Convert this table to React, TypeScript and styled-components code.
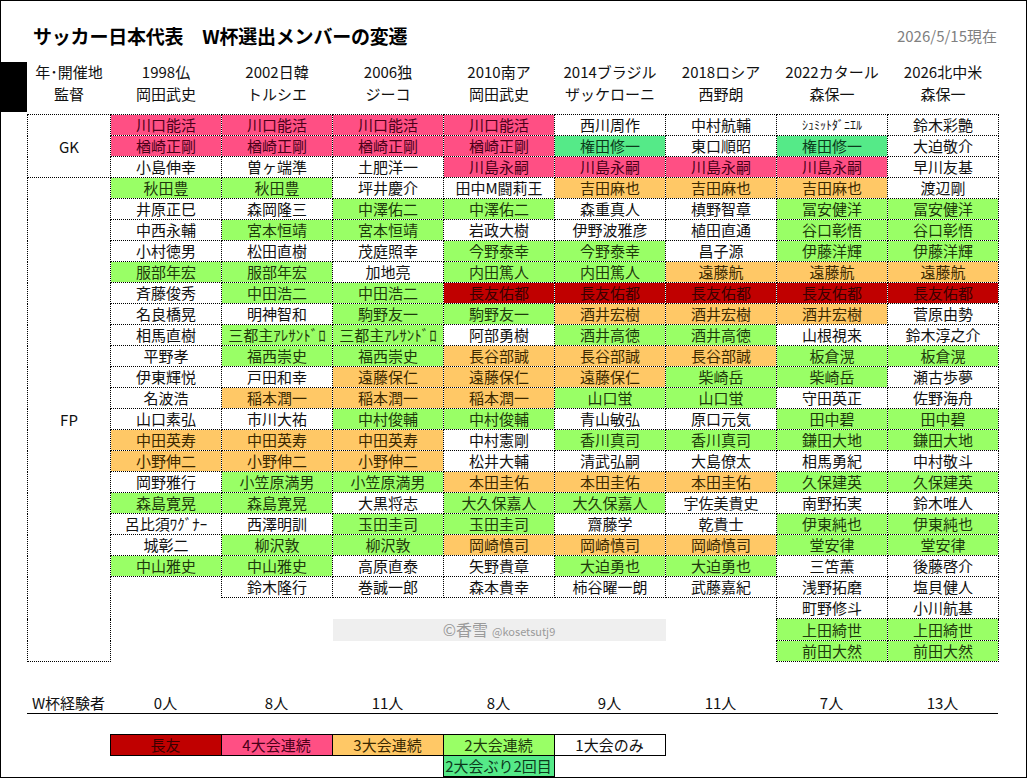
import styled, { createGlobalStyle } from "styled-components";

type Code = "R" | "P" | "O" | "G" | "M" | "W";

const fills: Record<Code, { bg: string; fg: string }> = {
  R: { bg: "#c00000", fg: "#3a0000" },
  P: { bg: "#ff4f84", fg: "#4a0018" },
  O: { bg: "#ffc866", fg: "#3a2800" },
  G: { bg: "#99ff66", fg: "#1e3a0c" },
  M: { bg: "#55ea88", fg: "#0c3a1c" },
  W: { bg: "#ffffff", fg: "#111111" },
};

type Entry = { code: Code; name: string; small: boolean };

// "P川口能活" -> pink cell, "~" after the code shrinks the text
const parse = (list: string): Entry[] =>
  list.split(" ").map((s) => ({
    code: s[0] as Code,
    small: s[1] === "~",
    name: s[1] === "~" ? s.slice(2) : s.slice(1),
  }));

const cups = [
  {
    year: "1998仏",
    coach: "岡田武史",
    gk: parse("P川口能活 P楢崎正剛 W小島伸幸"),
    fp: parse(
      "G秋田豊 W井原正巳 W中西永輔 W小村徳男 G服部年宏 W斉藤俊秀 W名良橋晃 W相馬直樹 W平野孝 W伊東輝悦 W名波浩 W山口素弘 O中田英寿 O小野伸二 W岡野雅行 G森島寛晃 W呂比須ﾜｸﾞﾅｰ W城彰二 G中山雅史"
    ),
  },
  {
    year: "2002日韓",
    coach: "トルシエ",
    gk: parse("P川口能活 P楢崎正剛 W曽ヶ端準"),
    fp: parse(
      "G秋田豊 W森岡隆三 G宮本恒靖 W松田直樹 G服部年宏 G中田浩二 W明神智和 G三都主ｱﾚｻﾝﾄﾞﾛ G福西崇史 W戸田和幸 O稲本潤一 W市川大祐 O中田英寿 O小野伸二 G小笠原満男 G森島寛晃 W西澤明訓 G柳沢敦 G中山雅史 W鈴木隆行"
    ),
  },
  {
    year: "2006独",
    coach: "ジーコ",
    gk: parse("P川口能活 P楢崎正剛 W土肥洋一"),
    fp: parse(
      "W坪井慶介 G中澤佑二 G宮本恒靖 W茂庭照幸 W加地亮 G中田浩二 G駒野友一 G三都主ｱﾚｻﾝﾄﾞﾛ G福西崇史 O遠藤保仁 O稲本潤一 G中村俊輔 O中田英寿 O小野伸二 G小笠原満男 W大黒将志 G玉田圭司 G柳沢敦 W高原直泰 W巻誠一郎"
    ),
  },
  {
    year: "2010南ア",
    coach: "岡田武史",
    gk: parse("P川口能活 P楢崎正剛 P川島永嗣"),
    fp: parse(
      "W田中M闘莉王 G中澤佑二 W岩政大樹 G今野泰幸 G内田篤人 R長友佑都 G駒野友一 W阿部勇樹 O長谷部誠 O遠藤保仁 O稲本潤一 G中村俊輔 W中村憲剛 W松井大輔 O本田圭佑 G大久保嘉人 G玉田圭司 O岡崎慎司 W矢野貴章 W森本貴幸"
    ),
  },
  {
    year: "2014ブラジル",
    coach: "ザッケローニ",
    gk: parse("W西川周作 M権田修一 P川島永嗣"),
    fp: parse(
      "O吉田麻也 W森重真人 W伊野波雅彦 G今野泰幸 G内田篤人 R長友佑都 O酒井宏樹 G酒井高徳 O長谷部誠 O遠藤保仁 G山口蛍 W青山敏弘 G香川真司 W清武弘嗣 O本田圭佑 G大久保嘉人 W齋藤学 O岡崎慎司 G大迫勇也 W柿谷曜一朗"
    ),
  },
  {
    year: "2018ロシア",
    coach: "西野朗",
    gk: parse("W中村航輔 W東口順昭 P川島永嗣"),
    fp: parse(
      "O吉田麻也 W槙野智章 W植田直通 W昌子源 O遠藤航 R長友佑都 O酒井宏樹 G酒井高徳 O長谷部誠 G柴崎岳 G山口蛍 W原口元気 G香川真司 W大島僚太 O本田圭佑 W宇佐美貴史 W乾貴士 O岡崎慎司 G大迫勇也 W武藤嘉紀"
    ),
  },
  {
    year: "2022カタール",
    coach: "森保一",
    gk: parse("W~ｼｭﾐｯﾄﾀﾞﾆｴﾙ M権田修一 P川島永嗣"),
    fp: parse(
      "O吉田麻也 G冨安健洋 G谷口彰悟 G伊藤洋輝 O遠藤航 R長友佑都 O酒井宏樹 W山根視来 G板倉滉 G柴崎岳 W守田英正 G田中碧 G鎌田大地 W相馬勇紀 G久保建英 W南野拓実 G伊東純也 G堂安律 W三笘薫 W浅野拓磨 W町野修斗 G上田綺世 G前田大然"
    ),
  },
  {
    year: "2026北中米",
    coach: "森保一",
    gk: parse("W鈴木彩艶 W大迫敬介 W早川友基"),
    fp: parse(
      "W渡辺剛 G冨安健洋 G谷口彰悟 G伊藤洋輝 O遠藤航 R長友佑都 W菅原由勢 W鈴木淳之介 G板倉滉 W瀬古歩夢 W佐野海舟 G田中碧 G鎌田大地 W中村敬斗 G久保建英 W鈴木唯人 G伊東純也 G堂安律 W後藤啓介 W塩貝健人 W小川航基 G上田綺世 G前田大然"
    ),
  },
];

const veterans = ["0人", "8人", "11人", "8人", "9人", "11人", "7人", "13人"];

const legend: { code: Code; label: string }[] = [
  { code: "R", label: "長友" },
  { code: "P", label: "4大会連続" },
  { code: "O", label: "3大会連続" },
  { code: "G", label: "2大会連続" },
  { code: "W", label: "1大会のみ" },
];

const GlobalStyle = createGlobalStyle`
  body {
    margin: 0;
    background: #fff;
    font-family: "Noto Sans CJK JP", "Noto Sans", sans-serif;
    color: #111;
  }
`;

const Frame = styled.div`
  width: 1027px;
  height: 778px;
  box-sizing: border-box;
  border: 1px solid #000;
  display: flex;
  flex-direction: column;
  overflow: hidden;
  background: #fff;
`;

const TitleBar = styled.div`
  height: 62px;
  box-sizing: border-box;
  padding: 23px 29px 0 32px;
  display: flex;
  justify-content: space-between;
  line-height: 24px;
`;

const Title = styled.h1`
  margin: 0;
  font-size: 19px;
  font-weight: 700;
  color: #000;
  letter-spacing: -0.2px;
`;

const AsOf = styled.span`
  font-size: 15px;
  color: #808080;
`;

const Body = styled.div`
  display: flex;
`;

const Gutter = styled.div`
  width: 26px;
  flex-shrink: 0;
`;

const BlackTab = styled.div`
  margin-top: 1px;
  height: 50px;
  background: #000;
`;

const Main = styled.div`
  width: 971px;
  display: flex;
  flex-direction: column;
`;

const Sheet = styled.table`
  width: 971px;
  table-layout: fixed;
  border-collapse: collapse;
  font-size: 15px;
`;

const LabelCol = styled.col`
  width: 83px;
`;

const CupCol = styled.col`
  width: 111px;
`;

const HeadCell = styled.th`
  height: 53px;
  padding: 0;
  vertical-align: top;
  font-weight: 400;
  line-height: 22px;
  text-align: center;
  color: #111;
  white-space: nowrap;
`;

const Row = styled.tr`
  height: 21px;
`;

const Cell = styled.td<{ $code: Code; $small?: boolean; $solid?: boolean }>`
  padding: 0;
  height: 20px;
  border: 1px ${({ $solid }) => ($solid ? "solid" : "dotted")} #000;
  background: ${({ $code }) => fills[$code].bg};
  color: ${({ $code }) => fills[$code].fg};
  font-size: ${({ $small }) => ($small ? "12px" : "15px")};
  line-height: 20px;
  text-align: center;
  white-space: nowrap;
  overflow: hidden;
`;

const Blank = styled.td`
  padding: 0;
  border: none;
`;

const Label = styled.td`
  padding: 0;
  border: 1px dotted #000;
  text-align: center;
  vertical-align: middle;
  font-size: 15px;
  color: #111;
`;

const Credit = styled.td`
  padding: 0;
  border: none;
  background: #efefef;
  text-align: center;
  color: #9a9a9a;
  font-size: 16px;
  line-height: 20px;
`;

const Handle = styled.span`
  font-size: 11px;
  margin-left: 4px;
`;

const Summary = styled.div`
  margin-top: 31px;
  display: grid;
  grid-template-columns: 83px repeat(8, 111px);
  border-bottom: 1px solid #000;
  height: 20px;
  line-height: 20px;
  font-size: 15px;
  text-align: center;
  color: #111;
`;

const Legend = styled.table`
  margin-top: 20px;
  border-collapse: collapse;
  table-layout: fixed;
  width: 638px;
`;

export default function App() {
  const rowIndexes = Array.from({ length: 26 }, (_, i) => i);
  return (
    <>
      <GlobalStyle />
      <Frame>
        <TitleBar>
          <Title>サッカー日本代表　W杯選出メンバーの変遷</Title>
          <AsOf>2026/5/15現在</AsOf>
        </TitleBar>
        <Body>
          <Gutter>
            <BlackTab />
          </Gutter>
          <Main>
            <Sheet>
              <colgroup>
                <LabelCol />
                {cups.map((c) => (
                  <CupCol key={c.year} />
                ))}
              </colgroup>
              <thead>
                <tr>
                  <HeadCell>
                    年･開催地
                    <br />
                    監督
                  </HeadCell>
                  {cups.map((c) => (
                    <HeadCell key={c.year}>
                      {c.year}
                      <br />
                      {c.coach}
                    </HeadCell>
                  ))}
                </tr>
              </thead>
              <tbody>
                {rowIndexes.map((i) => (
                  <Row key={i}>
                    {i === 0 && <Label rowSpan={3}>GK</Label>}
                    {i === 3 && <Label rowSpan={23}>FP</Label>}
                    {cups.map((cup, c) => {
                      if (i === 24 && c === 2)
                        return (
                          <Credit key={c} colSpan={3}>
                            ©香雪<Handle>@kosetsutj9</Handle>
                          </Credit>
                        );
                      if (i === 24 && (c === 3 || c === 4)) return null;
                      const e = i < 3 ? cup.gk[i] : cup.fp[i - 3];
                      if (!e) return <Blank key={c} />;
                      return (
                        <Cell key={c} $code={e.code} $small={e.small}>
                          {e.name}
                        </Cell>
                      );
                    })}
                  </Row>
                ))}
              </tbody>
            </Sheet>
            <Summary>
              <span>W杯経験者</span>
              {veterans.map((v, i) => (
                <span key={i}>{v}</span>
              ))}
            </Summary>
            <Legend>
              <colgroup>
                <LabelCol />
                {legend.map((l) => (
                  <CupCol key={l.label} />
                ))}
              </colgroup>
              <tbody>
                <Row>
                  <Blank />
                  {legend.map((l) => (
                    <Cell key={l.label} $code={l.code} $solid>
                      {l.label}
                    </Cell>
                  ))}
                </Row>
                <Row>
                  <Blank />
                  <Blank />
                  <Blank />
                  <Blank />
                  <Cell $code="M" $solid>
                    2大会ぶり2回目
                  </Cell>
                  <Blank />
                </Row>
              </tbody>
            </Legend>
          </Main>
        </Body>
      </Frame>
    </>
  );
}
